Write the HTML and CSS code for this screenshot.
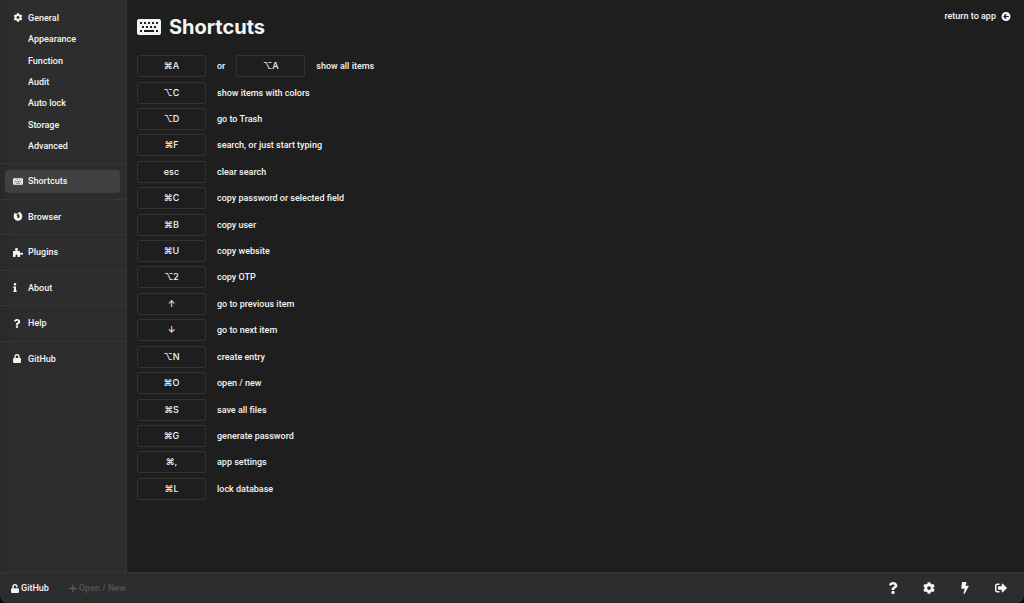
FILE: index.html
```html
<!DOCTYPE html>
<html lang="en">
<head>
<meta charset="utf-8">
<meta name="viewport" content="width=device-width, initial-scale=1">
<title>Shortcuts</title>
<link rel="stylesheet" href="styles.css">
</head>
<body>
<svg class="sprite" aria-hidden="true">
  <symbol id="cog" viewBox="0 0 512 512"><path d="M487.4 315.7l-42.6-24.6c4.3-23.2 4.3-47 0-70.2l42.6-24.6c4.9-2.8 7.1-8.6 5.5-14-11.1-35.6-30-67.8-54.7-94.6-3.8-4.1-10-5.1-14.8-2.3L380.8 110c-17.9-15.4-38.5-27.3-60.8-35.1V25.8c0-5.6-3.9-10.5-9.4-11.7-36.7-8.2-74.3-7.8-109.2 0-5.5 1.2-9.4 6.1-9.4 11.7V75c-22.2 7.9-42.8 19.8-60.8 35.1L88.7 85.5c-4.9-2.8-11-1.9-14.8 2.3-24.7 26.7-43.6 58.9-54.7 94.6-1.7 5.4.6 11.2 5.5 14L67.3 221c-4.3 23.2-4.3 47 0 70.2l-42.6 24.6c-4.9 2.8-7.1 8.6-5.5 14 11.1 35.6 30 67.8 54.7 94.6 3.8 4.1 10 5.1 14.8 2.3l42.6-24.6c17.9 15.4 38.5 27.3 60.8 35.1v49.2c0 5.6 3.9 10.5 9.4 11.7 36.7 8.2 74.3 7.8 109.2 0 5.5-1.2 9.4-6.1 9.4-11.7v-49.2c22.2-7.9 42.8-19.8 60.8-35.1l42.6 24.6c4.9 2.8 11 1.9 14.8-2.3 24.7-26.7 43.6-58.9 54.7-94.6 1.5-5.5-.7-11.3-5.6-14.1zM256 336c-44.1 0-80-35.9-80-80s35.9-80 80-80 80 35.9 80 80-35.9 80-80 80z"/></symbol>
  <symbol id="keyboard" viewBox="0 0 24 16"><path fill-rule="evenodd" d="M2 0h20a2 2 0 0 1 2 2v12a2 2 0 0 1-2 2H2a2 2 0 0 1-2-2V2a2 2 0 0 1 2-2zM3 3v2h2V3zM7 3v2h2V3zM11 3v2h2V3zM15 3v2h2V3zM19 3v2h2V3zM5 7v2h2V7zM9 7v2h2V7zM13 7v2h2V7zM17 7v2h2V7zM3 11v2h2v-2zM7 11v2h10v-2zM19 11v2h2v-2z"/></symbol>
  <symbol id="firefox" viewBox="0 0 16 16"><path fill-rule="evenodd" d="M1.800 1.200L4.500 3.200Q6 2.600 7.800 3L6.500 4.800L5 6.200L7.800 7.200Q7.500 8.400 6 8.800Q6.600 10.800 8.600 10.700Q11.200 10.300 11 7.500Q10.700 5 8.500 3.500Q8 1.500 9.500 .2Q13 .6 14.800 3.800Q16.600 7.600 15 11Q12.800 15.700 8 16Q3 15.700 .9 11Q-.5 7 1 4z"/></symbol>
  <symbol id="puzzle" viewBox="0 0 20 18"><path d="M0 6h5V4.500Q4 3.800 4 2.500Q4.300 0 7 0T10 2.500Q10 3.800 9 4.500V6h5v4h2Q17 9 18 9Q20 9.500 20 11.500T18 14Q17 14 16 13h-2v5H9v-2.500Q9 13 7 13T5 15.500V18H0z"/></symbol>
  <symbol id="info" viewBox="0 0 192 512"><path d="M20 424h20V280H20c-11 0-20-9-20-20v-48c0-11 9-20 20-20h112c11 0 20 9 20 20v212h20c11 0 20 9 20 20v48c0 11-9 20-20 20H20c-11 0-20-9-20-20v-48c0-11 9-20 20-20zM96 0C56 0 24 32 24 72s32 72 72 72 72-32 72-72S136 0 96 0z"/></symbol>
  <symbol id="question" viewBox="0 0 384 512"><path d="M202.021 0C122.202 0 70.503 32.703 29.914 91.026c-7.363 10.58-5.093 25.086 5.178 32.874l43.138 32.709c10.373 7.865 25.132 6.026 33.253-4.148 25.049-31.381 43.63-49.449 82.757-49.449 30.764 0 68.816 19.799 68.816 49.631 0 22.552-18.617 34.134-48.993 51.164-35.423 19.86-82.299 44.576-82.299 106.405V320c0 13.255 10.745 24 24 24h72.471c13.255 0 24-10.745 24-24v-5.773c0-42.86 125.268-44.645 125.268-160.627C377.504 66.256 286.902 0 202.021 0zM192 373.459c-38.196 0-69.271 31.075-69.271 69.271 0 38.195 31.075 69.27 69.271 69.27s69.271-31.075 69.271-69.271-31.075-69.27-69.271-69.27z"/></symbol>
  <symbol id="lock" viewBox="0 0 448 512"><path d="M400 224h-24v-72C376 68.200 307.800 0 224 0S72 68.200 72 152v72H48c-26.500 0-48 21.500-48 48v192c0 26.500 21.500 48 48 48h352c26.500 0 48-21.500 48-48V272c0-26.500-21.500-48-48-48zm-104 0H152v-72c0-39.700 32.300-72 72-72s72 32.300 72 72v72z"/></symbol>
  <symbol id="unlock" viewBox="0 0 448 512"><path d="M400 240H152V152.900c0-39.600 31.700-72.500 71.300-72.900 40-.4 72.700 32.100 72.700 72v16c0 13.300 10.700 24 24 24h32c13.300 0 24-10.700 24-24v-16C376 68 307.500-.3 223.500 0 139.500.3 72 69.500 72 153.500V240H48c-26.500 0-48 21.500-48 48v176c0 26.500 21.500 48 48 48h352c26.500 0 48-21.500 48-48V288c0-26.500-21.500-48-48-48z"/></symbol>
  <symbol id="plus" viewBox="0 0 16 16"><path d="M6.500 0h3v6.500H16v3H9.500V16h-3V9.500H0v-3h6.500z"/></symbol>
  <symbol id="bolt" viewBox="0 0 320 512"><path d="M296 160H180.600l42.600-129.800C227.200 15 215.700 0 200 0H56C44 0 33.800 8.900 32.200 20.800l-32 240C-1.700 275.200 9.500 288 24 288h118.700L96.600 482.500c-3.600 15.200 8 29.500 23.300 29.500 8.400 0 16.400-4.400 20.800-12l176-304c9.300-15.900-2.200-36-20.700-36z"/></symbol>
  <symbol id="signout" viewBox="0 0 512 512"><path d="M497 273L329 441c-15 15-41 4.500-41-17v-96H152c-13.300 0-24-10.700-24-24v-96c0-13.300 10.700-24 24-24h136V88c0-21.400 25.900-32 41-17l168 168c9.300 9.400 9.300 24.600 0 34zM192 436v-40c0-6.600-5.400-12-12-12H96c-17.700 0-32-14.300-32-32V160c0-17.700 14.300-32 32-32h84c6.600 0 12-5.400 12-12V76c0-6.600-5.400-12-12-12H96c-53 0-96 43-96 96v192c0 53 43 96 96 96h84c6.600 0 12-5.400 12-12z"/></symbol>
  <symbol id="back" viewBox="0 0 16 16"><path fill-rule="evenodd" d="M8 0a8 8 0 1 1 0 16A8 8 0 0 1 8 0zM3 8l4.700 4.700 1.500-1.400L7 9.100h6V6.900H7l2.200-2.200-1.500-1.400z"/></symbol>
</svg>

<div class="app">
  <nav class="sidebar" aria-label="Settings">
    <div class="general">
      <a class="item" href="#"><svg class="icon"><use href="#cog"/></svg>General</a>
      <a class="item sub" href="#">Appearance</a>
      <a class="item sub" href="#">Function</a>
      <a class="item sub" href="#">Audit</a>
      <a class="item sub" href="#">Auto lock</a>
      <a class="item sub" href="#">Storage</a>
      <a class="item sub" href="#">Advanced</a>
    </div>
    <div class="sections">
      <div class="section"><a class="item active" href="#" aria-current="page"><svg class="icon"><use href="#keyboard"/></svg>Shortcuts</a></div>
      <div class="section"><a class="item" href="#"><svg class="icon"><use href="#firefox"/></svg>Browser</a></div>
      <div class="section"><a class="item" href="#"><svg class="icon"><use href="#puzzle"/></svg>Plugins</a></div>
      <div class="section"><a class="item" href="#"><svg class="icon narrow"><use href="#info"/></svg>About</a></div>
      <div class="section"><a class="item" href="#"><svg class="icon medium"><use href="#question"/></svg>Help</a></div>
      <div class="section"><a class="item" href="#"><svg class="icon medium"><use href="#lock"/></svg>GitHub</a></div>
    </div>
  </nav>

  <main class="content">
    <a class="return" href="#">return to app<svg class="icon"><use href="#back"/></svg></a>
    <h1 class="title"><svg class="title-icon"><use href="#keyboard"/></svg>Shortcuts</h1>
    <div class="shortcuts">
      <div class="row"><button class="key">⌘A</button><span>or</span><button class="key">⌥A</button><span>show all items</span></div>
      <div class="row"><button class="key">⌥C</button><span>show items with colors</span></div>
      <div class="row"><button class="key">⌥D</button><span>go to Trash</span></div>
      <div class="row"><button class="key">⌘F</button><span>search, or just start typing</span></div>
      <div class="row"><button class="key">esc</button><span>clear search</span></div>
      <div class="row"><button class="key">⌘C</button><span>copy password or selected field</span></div>
      <div class="row"><button class="key">⌘B</button><span>copy user</span></div>
      <div class="row"><button class="key">⌘U</button><span>copy website</span></div>
      <div class="row"><button class="key">⌥2</button><span>copy OTP</span></div>
      <div class="row"><button class="key">↑</button><span>go to previous item</span></div>
      <div class="row"><button class="key">↓</button><span>go to next item</span></div>
      <div class="row"><button class="key">⌥N</button><span>create entry</span></div>
      <div class="row"><button class="key">⌘O</button><span>open / new</span></div>
      <div class="row"><button class="key">⌘S</button><span>save all files</span></div>
      <div class="row"><button class="key">⌘G</button><span>generate password</span></div>
      <div class="row"><button class="key">⌘,</button><span>app settings</span></div>
      <div class="row"><button class="key">⌘L</button><span>lock database</span></div>
    </div>
  </main>

  <footer class="footer">
    <button class="file"><svg class="file-icon"><use href="#unlock"/></svg>GitHub</button>
    <button class="file muted"><svg class="file-icon"><use href="#plus"/></svg>Open / New</button>
    <div class="tools">
      <button class="tool" aria-label="Help"><svg><use href="#question"/></svg></button>
      <button class="tool" aria-label="Settings"><svg><use href="#cog"/></svg></button>
      <button class="tool" aria-label="Generate"><svg><use href="#bolt"/></svg></button>
      <button class="tool" aria-label="Lock"><svg><use href="#signout"/></svg></button>
    </div>
  </footer>
</div>
</body>
</html>
```
FILE: styles.css
```css
* {
  box-sizing: border-box;
}

body {
  margin: 0;
  background: #0c0c0c;
  color: #f5f5f5;
  font: 500 9px/12px Roboto, "Liberation Sans", sans-serif;
}

.sprite {
  position: absolute;
  width: 0;
  height: 0;
}

svg {
  fill: currentColor;
}

a {
  color: inherit;
  text-decoration: none;
}

button {
  padding: 0;
  border: 0;
  background: none;
  color: inherit;
  font: inherit;
}

.app {
  display: grid;
  grid-template: 1fr auto / auto 1fr;
  min-height: 100vh;
  overflow: hidden;
  border-radius: 0 0 8px 8px;
  background: #1e1e1e;
}

.sidebar {
  width: 127px;
  border-right: 1px solid #353535;
  background: linear-gradient(90deg, #292929, #2d2d2d 16px);
}

.general {
  display: grid;
  grid-auto-rows: 1fr;
  min-height: 163px;
  padding: 7px 0 6px;
}

.sections {
  display: grid;
  grid-auto-rows: 1fr;
  min-height: 213px;
}

.section {
  display: grid;
  padding: 6px 6px 6px 5px;
  border-top: 1px solid #363636;
}

.item {
  display: flex;
  align-items: center;
  gap: 5px;
  padding-left: 8px;
  border-radius: 4px;
}

.general .item {
  padding-left: 13px;
}

.general .sub {
  padding-left: 28px;
}

.item.active {
  background: #404040;
}

.icon {
  width: 10px;
  height: 9px;
}

.item .narrow {
  width: 4px;
  margin-right: 6px;
}

.item .medium {
  width: 8px;
  margin-right: 2px;
}

.content {
  padding: 14px 10px 32px;
  position: relative;
}

.return {
  position: absolute;
  top: 10px;
  right: 13px;
  display: flex;
  align-items: center;
  gap: 5px;
}

.title {
  display: flex;
  align-items: center;
  gap: 8px;
  margin: 0 0 13px;
  font-family: Inter, "Liberation Sans", sans-serif;
  font-size: 20px;
  line-height: 26px;
  font-weight: 700;
}

.title-icon {
  width: 24px;
  height: 16px;
}

.shortcuts {
  display: grid;
  grid-auto-rows: 1fr;
  min-height: 449px;
}

.row {
  display: flex;
  align-items: center;
  gap: 11px;
}

.key {
  width: 69px;
  height: 22px;
  border: 1px solid #323232;
  border-radius: 2px;
  font-family: Inter, "Liberation Sans", sans-serif;
}

.footer {
  grid-column: 1 / -1;
  display: flex;
  align-items: center;
  gap: 20px;
  padding: 8px 16px 8px 11px;
  border-top: 1px solid #363636;
  background: #2d2d2d;
}

.file {
  display: flex;
  align-items: center;
  gap: 2px;
}

.file-icon {
  width: 8px;
  height: 9px;
}

.muted {
  color: #555;
}

.tools {
  display: flex;
  gap: 22px;
  margin-left: auto;
}

.tool {
  display: flex;
  align-items: center;
  justify-content: center;
  width: 14px;
  height: 14px;
}

.tool svg {
  width: 12px;
  height: 12px;
}
```
